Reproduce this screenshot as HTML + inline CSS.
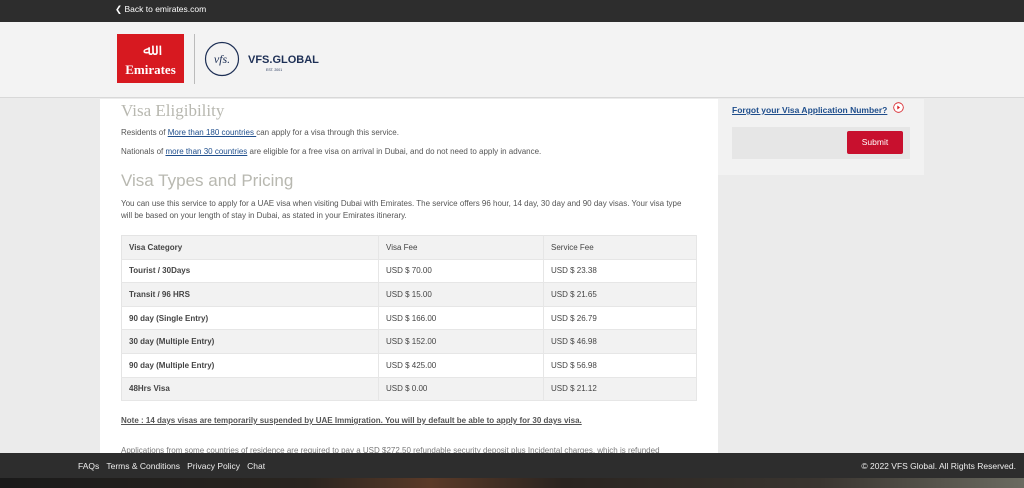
<!DOCTYPE html>
<html><head><meta charset="utf-8"><style>
*{margin:0;padding:0;box-sizing:border-box}
body{width:1024px;height:488px;overflow:hidden;background:#ebebeb;font-family:"Liberation Sans",Arial,sans-serif;position:relative}
.top{position:absolute;left:0;top:0;width:1024px;height:22px;background:#2d2d2d;color:#fff;font-size:8.5px}
.top span{position:absolute;left:115px;top:4px}
.hdr{position:absolute;left:0;top:22px;width:1024px;height:76px;background:#f3f3f3;border-bottom:1px solid #d8d8d8}
.em{position:absolute;left:117px;top:12px;width:67px;height:49px;background:#d71920;color:#fff;font-family:"Liberation Serif",serif;font-weight:bold;font-size:13px;text-align:center}
.em b{position:absolute;left:0;right:0;top:28px}
.div{position:absolute;left:194px;top:12px;width:1px;height:50px;background:#bbb}
.main{position:absolute;left:100px;top:99px;width:618px;height:354px;background:#fff;overflow:hidden}
.side{position:absolute;left:718px;top:99px;width:206px;height:76px;background:#f2f2f2}
h1{position:absolute;left:21px;font-weight:normal;color:#b8b8b0}
p{position:absolute;left:21px;font-size:8px;color:#555;line-height:12px}
a{color:#1f4e8c;text-decoration:underline}
table{position:absolute;left:21px;top:136px;width:576px;border-collapse:collapse;font-size:8px;color:#444;border:1px solid #e4e4e4}
td{height:23.6px;padding-left:7px;border-right:1px solid #e6e6e6;border-bottom:1px solid #e6e6e6}
tr:nth-child(odd){background:#f2f2f2}
td:first-child{font-weight:bold;width:257px}
td:nth-child(2){width:165px}
.foot{position:absolute;left:0;top:453px;width:1024px;height:25px;background:#2d2d2d;color:#eee;font-size:8.5px}
.bot{position:absolute;left:0;top:478px;width:1024px;height:10px;background:linear-gradient(90deg,#1a1a1a,#2a2520 30%,#5a3a28 42%,#2a2420 55%,#3a3530 80%,#6a6a60)}
</style></head><body>
<div class="top"><span>&#10094; Back to emirates.com</span></div>
<div class="hdr">
<div class="em"><div style="position:absolute;left:26px;top:6px;font-size:16px;font-weight:normal">ﷲ</div><b>Emirates</b></div>
<div class="div"></div>
<svg style="position:absolute;left:203px;top:18px" width="120" height="40"><circle cx="19" cy="19" r="16.5" fill="none" stroke="#1d2f55" stroke-width="1.2"/><text x="19" y="23" text-anchor="middle" font-family="Liberation Serif" font-style="italic" font-size="12" fill="#1d2f55">vfs.</text><text x="45" y="23" font-family="Liberation Sans" font-weight="bold" font-size="11" fill="#1d2f55">VFS.GLOBAL</text><text x="63" y="31" font-family="Liberation Sans" font-size="3.5" fill="#1d2f55">EST. 2001</text></svg>
</div>
<div class="main">
<h1 style="top:2px;font-family:'Liberation Serif',serif;font-size:17px">Visa Eligibility</h1>
<p style="top:28px">Residents of <a>More than 180 countries </a>can apply for a visa through this service.</p>
<p style="top:47px">Nationals of <a>more than 30 countries</a> are eligible for a free visa on arrival in Dubai, and do not need to apply in advance.</p>
<h1 style="top:72px;font-size:17px">Visa Types and Pricing</h1>
<p style="top:99px;width:565px">You can use this service to apply for a UAE visa when visiting Dubai with Emirates. The service offers 96 hour, 14 day, 30 day and 90 day visas. Your visa type will be based on your length of stay in Dubai, as stated in your Emirates itinerary.</p>
<table>
<tr><td>Visa Category</td><td>Visa Fee</td><td>Service Fee</td></tr>
<tr><td>Tourist / 30Days</td><td>USD $ 70.00</td><td>USD $ 23.38</td></tr>
<tr><td>Transit / 96 HRS</td><td>USD $ 15.00</td><td>USD $ 21.65</td></tr>
<tr><td>90 day (Single Entry)</td><td>USD $ 166.00</td><td>USD $ 26.79</td></tr>
<tr><td>30 day (Multiple Entry)</td><td>USD $ 152.00</td><td>USD $ 46.98</td></tr>
<tr><td>90 day (Multiple Entry)</td><td>USD $ 425.00</td><td>USD $ 56.98</td></tr>
<tr><td>48Hrs Visa</td><td>USD $ 0.00</td><td>USD $ 21.12</td></tr>
</table>
<p style="top:316px;font-weight:bold;text-decoration:underline">Note : 14 days visas are temporarily suspended by UAE Immigration. You will by default be able to apply for 30 days visa.</p>
<p style="top:346px;color:#777">Applications from some countries of residence are required to pay a USD $272.50 refundable security deposit plus Incidental charges, which is refunded</p>
</div>
<div class="side">
<a style="position:absolute;left:14px;top:6px;font-size:8.5px;font-weight:bold">Forgot your Visa Application Number? </a>
<svg style="position:absolute;left:175px;top:3px" width="11" height="11"><circle cx="5.5" cy="5.5" r="4.8" fill="#fff" stroke="#d71920" stroke-width=".8"/><path d="M4.3 3.5L7 5.5L4.3 7.5Z" fill="#d71920"/></svg>
<div style="position:absolute;left:14px;top:28px;width:178px;height:32px;background:#e6e6e6"></div>
<div style="position:absolute;left:129px;top:32px;width:56px;height:23px;background:#c8102e;border-radius:2px;color:#fff;font-size:8.5px;text-align:center;line-height:23px">Submit</div>
</div>
<div class="foot"><span style="position:absolute;left:78px;top:8px">FAQs&nbsp;&nbsp;&nbsp;Terms &amp; Conditions&nbsp;&nbsp;&nbsp;Privacy Policy&nbsp;&nbsp;&nbsp;Chat</span><span style="position:absolute;right:8px;top:8px">© 2022 VFS Global. All Rights Reserved.</span></div>
<div class="bot"></div>
</body></html>
